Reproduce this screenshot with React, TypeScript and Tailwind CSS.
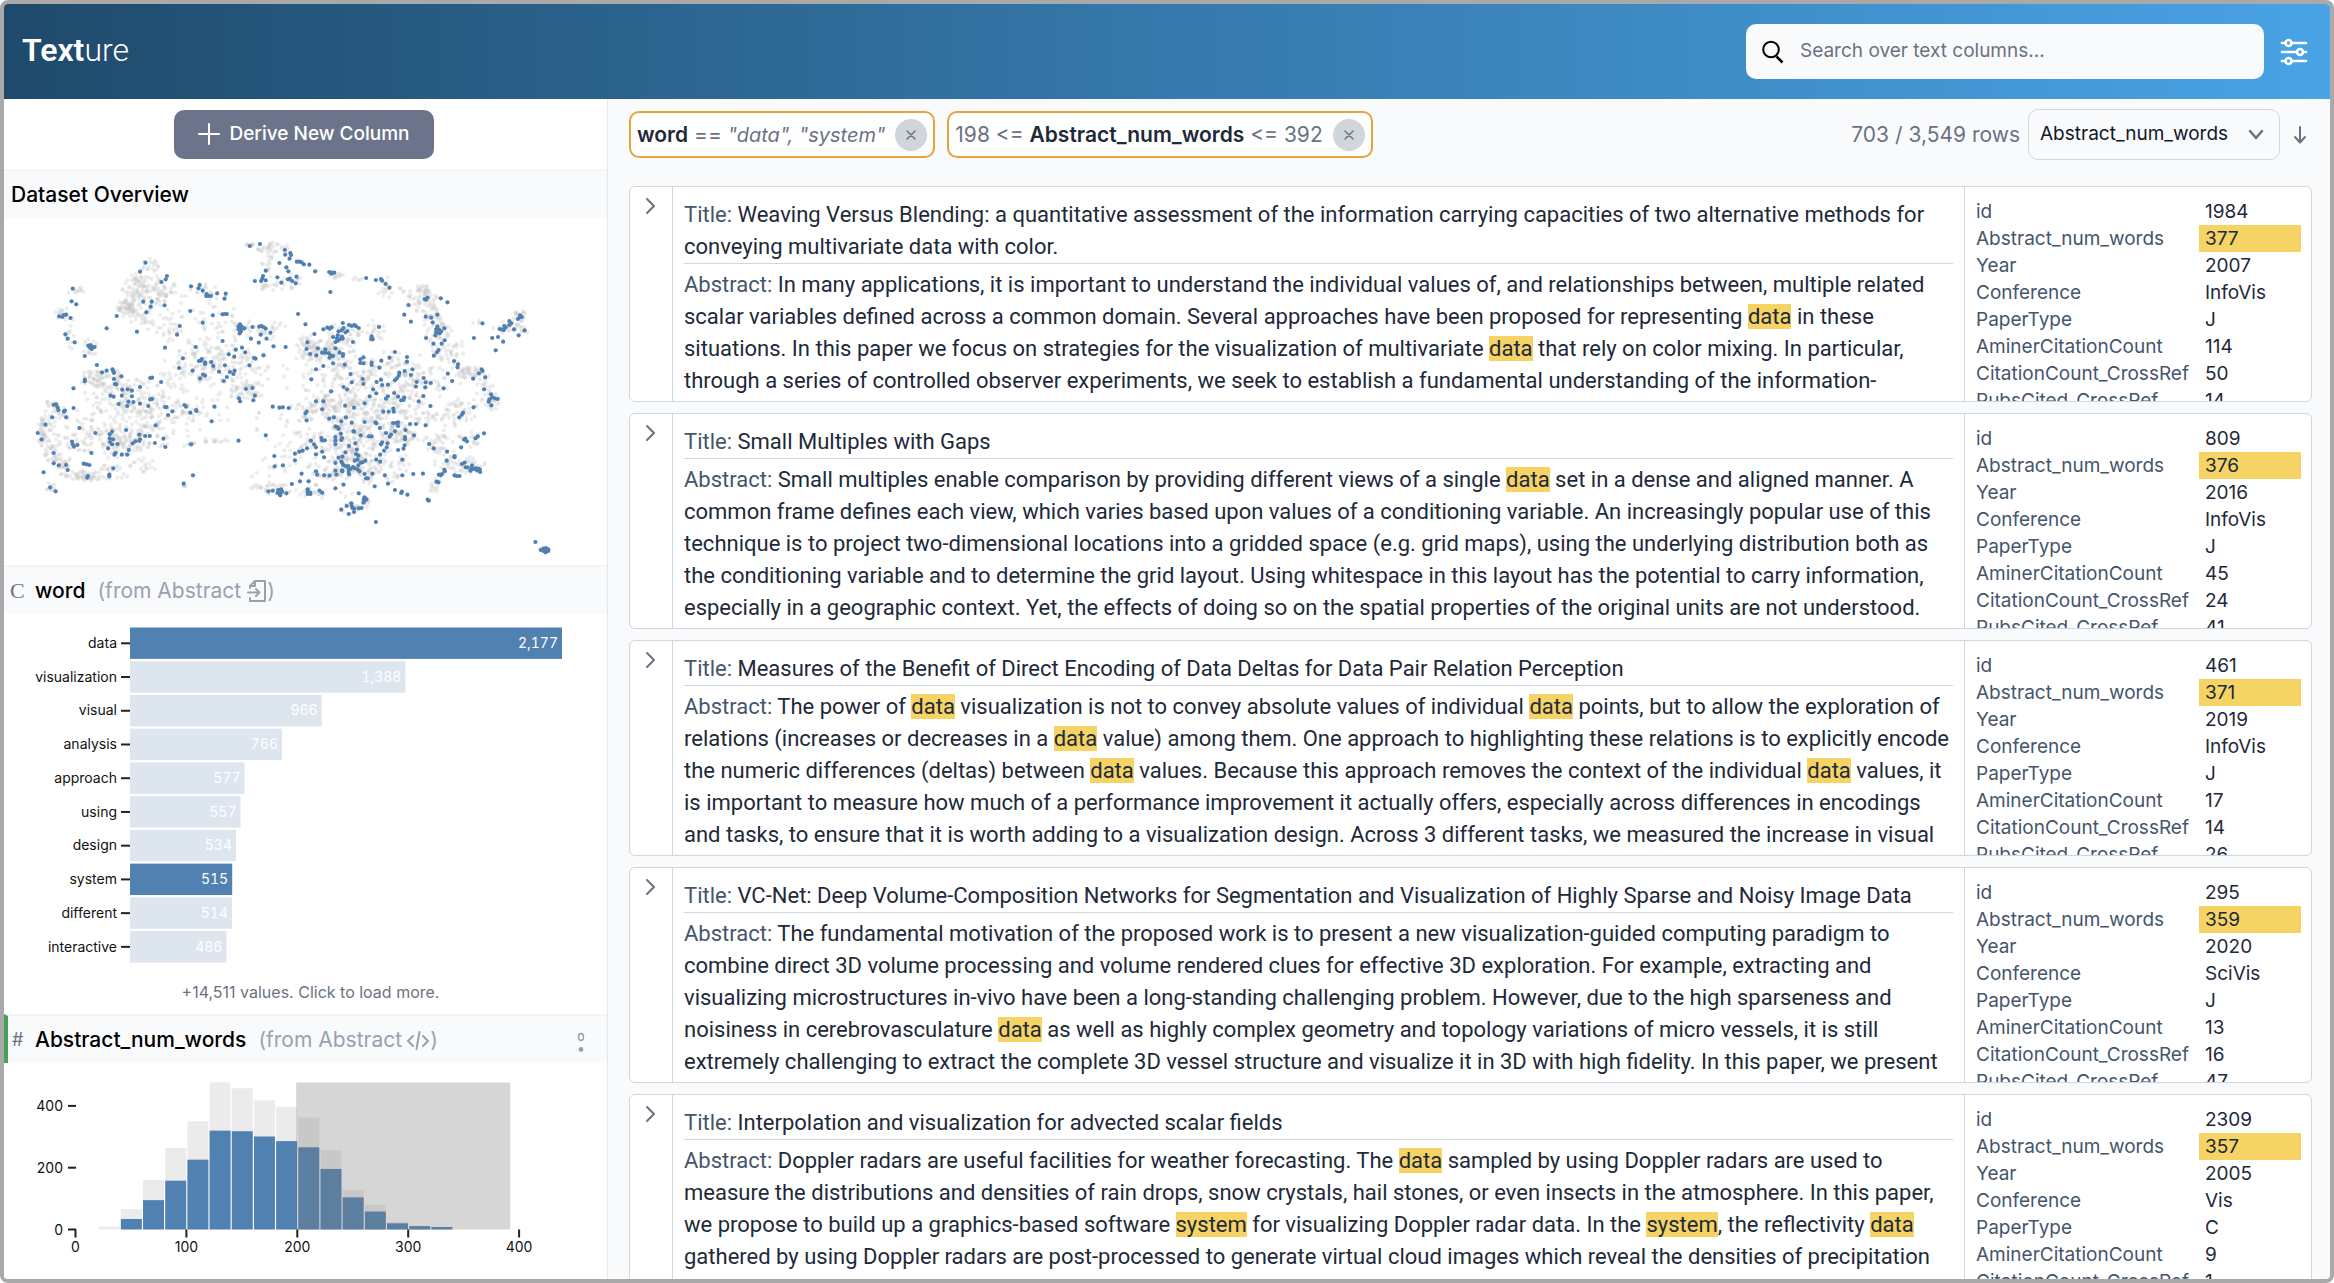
import { Fragment } from "react";

/* Projection of the selected papers, as "x,y" pairs in a 1568 x 1080 space. */
const SELECTED = `
642,108 668,102 732,120 733,134 746,129 748,135 744,146 718,159 736,172 741,184 763,155 769,155 775,157 781,163 795,164 683,182 676,198 655,213 671,213 674,206 683,211 713,202 723,218 740,208 745,206 751,213 760,220 762,200 810,184 846,186 853,188 859,188 852,191 941,204 966,210 979,207 982,212 991,222 1001,233 849,246 766,312
374,158 360,185 429,198 426,208 415,216 491,229 513,225 510,235 521,242 531,252 535,258 542,258 530,258 558,250 580,251 577,266 187,236 184,274 196,283 152,319 160,321 164,315 170,314 181,324 168,373 174,386 192,397 274,355 300,318 352,365 368,275 390,275 387,290 376,307 423,286 489,303 547,316 572,313 578,312 583,312 521,338 462,348 455,374 424,413 503,411
227,407 233,405 239,411 236,417 243,411 231,412 218,438 249,465 262,487 274,482 289,478 291,484 293,489 312,499 293,507 295,522 299,523 314,539 328,538 339,542 313,557 284,557 292,560 339,559 330,575 343,576 327,588 305,582 360,581 381,588 360,531 386,504 391,503 414,516 218,509 218,514 189,535 386,568 391,567 424,591 428,591 443,604 432,615 474,585 478,590 489,608 504,600 505,603 551,590 544,634 400,646
617,343 613,350 621,350 617,356 624,355 613,358 619,364 616,370 628,355 649,351 666,350 672,348 677,351 683,356 695,368 670,374 645,386 685,386 665,398 703,409 734,411 572,393 622,413 606,419 588,433 602,440 630,427 677,436 653,444 657,446 641,466 470,445 460,474 495,482 511,453 519,447 516,452 527,457 527,462 543,456 548,468 514,505 522,494 527,497 578,466 563,485 591,486 603,482 600,492 583,501 575,513 632,537 649,534 655,557 651,571 614,565 617,574
138,585 144,583 148,592 150,600 164,605 167,602 170,622 189,594 134,622 117,644 97,669 107,688 204,654 245,669 185,695 187,703 190,710 199,705 138,729 235,729 138,760 151,766 170,765 174,780 215,761 222,763 230,765 226,798 224,803 281,794 281,799 291,775 112,787 129,832 143,844 288,665 282,673 282,685 291,688 283,696 288,703 302,702 278,715 297,729 294,734 313,734 327,734 331,720 341,700 348,694 358,693 360,688 358,674 373,678 385,678 324,660 420,686 398,699 425,711 491,703 613,692 683,676 496,796 472,821
701,590 718,593 727,592 742,594 785,343 808,372 790,397 788,417 797,432 817,415 813,436 828,428 836,418 836,428 845,430 851,437 847,443 856,438 862,415 873,428 882,432 881,438 856,460 831,468 812,478 800,508 831,358 841,353 847,356 852,352 881,339 883,354 878,361 870,364 888,367 893,363 897,345 904,348 911,345 915,349 922,354 856,381 866,385 868,376 873,388 879,380 881,386 862,396 867,393 907,396 955,379 954,387 958,388 974,351
886,464 934,442 926,448 926,459 934,460 955,458 955,465 980,452 975,473 1001,443 1015,426 1046,441 1046,455 901,492 904,517 932,507 934,522 883,531 892,538 851,544 968,516 979,509 982,525 997,524 959,538 967,550 950,559 937,580 910,593 887,587 1013,549 997,559 992,566 1023,560 1031,571 1037,570 1039,563 1015,511 1020,505 1025,497 1026,488 1040,483 1060,478 1056,495 1071,516 1069,530 1089,504 1094,517 1107,519 1093,532 1088,558 1076,574 1106,588 1140,535 1151,491 1162,513 1167,453 1177,463 1176,472
1039,314 1050,285 1056,335 1091,267 1095,269 1099,263 1133,265 1150,277 1094,320 1108,323 1124,314 1112,337 1124,350 1121,358 1128,359 1121,368 1134,364 1142,355 1130,370 1119,376 1095,384 1143,391 1135,401 1114,401 1127,420 1123,427 1115,437
1240,340 1218,384 1265,384 1280,381 1284,357 1291,359 1296,348 1300,352 1295,360 1309,333 1314,340 1309,345 1321,358 1331,327 1337,316 1341,321 1336,322 1348,361 1333,376 1293,395 1274,421 1216,506 1231,490 1238,478 1240,483 1247,502 1244,538 1262,553 1265,562 1258,568 1272,565 1279,567 1256,575 1263,586 1217,592 1190,608 1187,614 1180,622
812,574 831,574 828,598 788,605 785,610 788,631 846,626 858,622 889,622 877,634 904,638 862,649 867,651 870,656 908,663 910,665 927,676 876,671 862,681 879,684 877,690 862,692 862,703 826,684 828,691 835,691 799,692 807,703 812,712 789,715 778,722 769,725 758,731 828,725 812,733 833,742 758,751 705,738 706,769 727,766 775,791 812,784 815,794 833,796 771,814 793,814 750,822 722,838 937,636 965,637 967,640 976,654 985,605 999,605 1011,596 1012,605 948,679 955,679 992,669 1010,639 1018,639 1023,637 1023,648 1015,664 1005,674 1001,680 1042,660 1054,642 1069,642 1094,646 1064,676 1041,681 1041,688 1040,706 1037,716 1023,720 996,700 982,697 979,703 994,712 987,722 977,734 967,749 977,755 913,700 897,708 917,719 888,727 915,732 921,737 880,740 870,743 862,759 877,754 880,760 882,765 888,768 895,768 896,776 901,777 907,771 912,775 921,766 919,749 912,752 927,758 932,757 939,752 919,778 924,784 897,793 896,786 880,784 879,781 862,782 865,794 847,797 937,792 941,805 945,805 957,791 989,796 1034,749 1034,796 1062,792 1087,791 997,821 963,829 883,824 862,835 922,850 1015,840 1033,845 1031,849 1047,854
1103,702 1115,715 1149,725 1168,738 1168,742 1148,752 1185,712 1196,686 1193,689 1200,694 1222,685 1228,679 1244,670 1187,762 1194,758 1197,772 1202,772 1213,766 1212,776 1217,777 1222,775 1228,776 1226,781 1233,778 1234,786 1209,782 1168,796 1174,798 1181,798 1142,779 1143,784 1136,792 1128,794 1133,796 1122,815 1127,817 1099,869 1102,872
690,844 701,842 715,840 713,849 720,850 725,845 720,856 736,850 791,838 791,846 791,852 797,848 798,852 821,842 828,848 937,862 935,869 942,868 937,873 934,878 903,880 891,888 904,888 877,899 906,894 910,896 922,895 929,894 910,906 896,912 966,936 1376,996 1390,1020 1397,1016 1397,1023 1402,1020 1402,1027 1409,1018 1409,1023 1403,1014`;

/* Density of the remaining papers: centre x, centre y, spread x, spread y, count. */
const DENSITY: [number, number, number, number, number][] = [
  [385, 172, 12, 14, 18], [350, 230, 16, 22, 45], [370, 255, 32, 30, 55], [330, 290, 16, 12, 50],
  [415, 240, 20, 26, 40], [350, 318, 20, 14, 25], [430, 345, 26, 26, 30], [195, 242, 12, 7, 10],
  [160, 310, 10, 10, 14], [178, 370, 8, 30, 12], [232, 415, 10, 16, 16], [240, 505, 20, 12, 40],
  [290, 520, 24, 22, 40], [350, 560, 40, 28, 60], [380, 605, 50, 24, 70], [270, 560, 30, 24, 30],
  [140, 600, 14, 20, 25], [115, 665, 10, 26, 50], [135, 720, 12, 20, 30], [165, 765, 16, 16, 30],
  [220, 797, 28, 8, 45], [290, 785, 28, 12, 25], [330, 700, 30, 18, 65], [220, 660, 46, 34, 70],
  [280, 690, 36, 30, 45], [370, 770, 20, 14, 18], [380, 650, 40, 26, 40], [130, 832, 8, 10, 10],
  [640, 106, 8, 3, 8], [700, 112, 24, 8, 28], [690, 150, 10, 18, 14], [690, 225, 22, 14, 18],
  [750, 215, 14, 16, 14], [860, 195, 12, 6, 10], [910, 206, 12, 3, 5], [990, 240, 10, 22, 14],
  [520, 240, 20, 10, 16], [560, 310, 30, 40, 18], [480, 330, 60, 40, 24], [620, 360, 30, 16, 20],
  [690, 360, 26, 16, 20], [550, 430, 50, 26, 60], [600, 460, 50, 30, 60], [500, 480, 30, 20, 40],
  [640, 540, 26, 14, 45], [500, 590, 40, 20, 24], [430, 520, 30, 40, 24], [560, 560, 60, 30, 20],
  [480, 640, 60, 30, 16], [560, 694, 20, 3, 12], [495, 700, 8, 6, 8], [440, 706, 30, 3, 5],
  [477, 825, 3, 6, 5], [820, 425, 28, 18, 75], [790, 400, 16, 18, 24], [870, 440, 24, 24, 45],
  [890, 370, 30, 18, 35], [965, 365, 12, 20, 18], [850, 520, 40, 34, 45], [930, 520, 40, 34, 60],
  [1000, 480, 44, 30, 60], [1060, 510, 40, 30, 60], [860, 590, 34, 20, 75], [790, 590, 24, 18, 25],
  [960, 610, 40, 24, 70], [1030, 590, 40, 28, 50], [1020, 670, 26, 18, 75], [930, 690, 50, 30, 70],
  [860, 690, 30, 34, 50], [900, 750, 30, 24, 60], [860, 790, 44, 20, 40], [780, 720, 36, 30, 35],
  [980, 760, 40, 28, 45], [960, 800, 34, 14, 26], [730, 640, 40, 40, 20], [690, 790, 24, 26, 12],
  [665, 830, 14, 5, 9], [715, 840, 18, 10, 22], [800, 842, 22, 10, 18], [1085, 240, 10, 8, 22],
  [1080, 275, 20, 16, 35], [1110, 300, 14, 26, 26], [1125, 360, 20, 26, 40], [1140, 410, 26, 20, 20],
  [1030, 240, 14, 6, 5], [1205, 487, 20, 10, 40], [1170, 430, 14, 26, 14], [1130, 480, 40, 34, 30],
  [1250, 540, 14, 24, 22], [1265, 575, 10, 14, 16], [1190, 600, 24, 24, 26], [1140, 620, 40, 34, 30],
  [1135, 700, 16, 16, 24], [1150, 760, 18, 26, 26], [1210, 765, 20, 14, 26], [1205, 690, 18, 14, 18],
  [1115, 825, 10, 12, 12], [1335, 320, 10, 12, 18], [1300, 350, 18, 12, 20], [1345, 365, 6, 10, 8],
  [1220, 336, 12, 3, 4], [1080, 650, 34, 40, 30], [910, 895, 18, 12, 20], [940, 868, 8, 8, 8],
  [1395, 1018, 8, 5, 8], [720, 500, 50, 34, 16], [900, 640, 60, 40, 60], [840, 850, 40, 8, 8],
];

const selectedPoints = SELECTED.trim()
  .split(/\s+/)
  .map((p) => p.split(",").map(Number));

function buildBackground() {
  let seed = 7;
  const rand = () => {
    seed = (seed * 1664525 + 1013904223) % 4294967296;
    return seed / 4294967296;
  };
  const points: number[][] = [];
  for (const [cx, cy, sx, sy, n] of DENSITY) {
    for (let i = 0; i < n; i++) {
      const r = Math.min(Math.sqrt(-2 * Math.log(rand() + 1e-9)), 1.8);
      const a = rand() * Math.PI * 2;
      points.push([cx + Math.cos(a) * r * sx, cy + Math.sin(a) * r * sy]);
    }
  }
  return points;
}
const backgroundPoints = buildBackground();

const WORDS: [string, number, boolean][] = [
  ["data", 2177, true],
  ["visualization", 1388, false],
  ["visual", 966, false],
  ["analysis", 766, false],
  ["approach", 577, false],
  ["using", 557, false],
  ["design", 534, false],
  ["system", 515, true],
  ["different", 514, false],
  ["interactive", 486, false],
];

const BINS: [number, number][] = [
  [10, 0], [66, 34], [160, 95], [264, 158], [350, 226], [476, 320], [457, 318], [418, 301],
  [397, 286], [362, 266], [256, 196], [128, 104], [80, 58], [24, 20], [12, 11], [8, 8],
];

type Paper = { title: string[]; abstract: string[]; values: string[] };

const FIELDS = [
  "id", "Abstract_num_words", "Year", "Conference", "PaperType",
  "AminerCitationCount", "CitationCount_CrossRef", "PubsCited_CrossRef",
];

/* Text between square brackets is highlighted. */
const PAPERS: Paper[] = [
  {
    title: [
      "Weaving Versus Blending: a quantitative assessment of the information carrying capacities of two alternative methods for",
      "conveying multivariate data with color.",
    ],
    abstract: [
      "In many applications, it is important to understand the individual values of, and relationships between, multiple related",
      "scalar variables defined across a common domain. Several approaches have been proposed for representing [data] in these",
      "situations. In this paper we focus on strategies for the visualization of multivariate [data] that rely on color mixing. In particular,",
      "through a series of controlled observer experiments, we seek to establish a fundamental understanding of the information-",
    ],
    values: ["1984", "377", "2007", "InfoVis", "J", "114", "50", "14"],
  },
  {
    title: ["Small Multiples with Gaps"],
    abstract: [
      "Small multiples enable comparison by providing different views of a single [data] set in a dense and aligned manner. A",
      "common frame defines each view, which varies based upon values of a conditioning variable. An increasingly popular use of this",
      "technique is to project two-dimensional locations into a gridded space (e.g. grid maps), using the underlying distribution both as",
      "the conditioning variable and to determine the grid layout. Using whitespace in this layout has the potential to carry information,",
      "especially in a geographic context. Yet, the effects of doing so on the spatial properties of the original units are not understood.",
    ],
    values: ["809", "376", "2016", "InfoVis", "J", "45", "24", "41"],
  },
  {
    title: ["Measures of the Benefit of Direct Encoding of Data Deltas for Data Pair Relation Perception"],
    abstract: [
      "The power of [data] visualization is not to convey absolute values of individual [data] points, but to allow the exploration of",
      "relations (increases or decreases in a [data] value) among them. One approach to highlighting these relations is to explicitly encode",
      "the numeric differences (deltas) between [data] values. Because this approach removes the context of the individual [data] values, it",
      "is important to measure how much of a performance improvement it actually offers, especially across differences in encodings",
      "and tasks, to ensure that it is worth adding to a visualization design. Across 3 different tasks, we measured the increase in visual",
    ],
    values: ["461", "371", "2019", "InfoVis", "J", "17", "14", "26"],
  },
  {
    title: ["VC-Net: Deep Volume-Composition Networks for Segmentation and Visualization of Highly Sparse and Noisy Image Data"],
    abstract: [
      "The fundamental motivation of the proposed work is to present a new visualization-guided computing paradigm to",
      "combine direct 3D volume processing and volume rendered clues for effective 3D exploration. For example, extracting and",
      "visualizing microstructures in-vivo have been a long-standing challenging problem. However, due to the high sparseness and",
      "noisiness in cerebrovasculature [data] as well as highly complex geometry and topology variations of micro vessels, it is still",
      "extremely challenging to extract the complete 3D vessel structure and visualize it in 3D with high fidelity. In this paper, we present",
    ],
    values: ["295", "359", "2020", "SciVis", "J", "13", "16", "47"],
  },
  {
    title: ["Interpolation and visualization for advected scalar fields"],
    abstract: [
      "Doppler radars are useful facilities for weather forecasting. The [data] sampled by using Doppler radars are used to",
      "measure the distributions and densities of rain drops, snow crystals, hail stones, or even insects in the atmosphere. In this paper,",
      "we propose to build up a graphics-based software [system] for visualizing Doppler radar data. In the [system], the reflectivity [data]",
      "gathered by using Doppler radars are post-processed to generate virtual cloud images which reveal the densities of precipitation",
    ],
    values: ["2309", "357", "2005", "Vis", "C", "9", "1", "8"],
  },
];

function Lines({ label, lines }: { label: string; lines: string[] }) {
  return (
    <p className="whitespace-nowrap">
      <span className="text-slate-600">{label}: </span>
      {lines.map((line, i) => (
        <Fragment key={i}>
          {i > 0 && <br />}
          {line.split(/[[\]]/).map((part, j) =>
            j % 2 ? (
              <mark key={j} className="bg-[#f5d365] text-inherit">{part}</mark>
            ) : (
              <Fragment key={j}>{part}</Fragment>
            ),
          )}
        </Fragment>
      ))}
    </p>
  );
}

function PaperCard({ paper }: { paper: Paper }) {
  return (
    <article className="flex h-[216px] shrink-0 overflow-hidden rounded-md border border-gray-300 bg-white">
      <div className="flex w-[43px] shrink-0 items-start justify-center border-r border-gray-300 pt-2.5">
        <button type="button" aria-label="Expand row" className="text-gray-500">
          <svg width="12" height="18" viewBox="0 0 12 18" fill="none" stroke="currentColor" strokeWidth="2" strokeLinecap="round" strokeLinejoin="round">
            <path d="M2 2l7 7-7 7" />
          </svg>
        </button>
      </div>
      <div className="min-w-0 flex-1 overflow-hidden px-[11px] pt-3 font-['Roboto',sans-serif] text-[22px] leading-8 text-gray-800">
        <Lines label="Title" lines={paper.title} />
        <div className="border-t border-gray-300 pt-[5px]">
          <Lines label="Abstract" lines={paper.abstract} />
        </div>
      </div>
      <div className="w-[347px] shrink-0 overflow-hidden border-l border-gray-300 pt-[11px] pr-2.5 pl-[11px]">
        <table className="w-full table-fixed text-left text-[19px] leading-[27px] text-gray-800">
          <tbody>
            {FIELDS.map((field, i) => (
              <tr key={field}>
                <th className="w-[223px] p-0 font-normal text-slate-600">{field}</th>
                <td className={i === 1 ? "bg-[#f5d365] p-0 pl-1.5" : "p-0 pl-1.5"}>{paper.values[i]}</td>
              </tr>
            ))}
          </tbody>
        </table>
      </div>
    </article>
  );
}

function Overview() {
  return (
    <svg viewBox="4 218 603 347" className="block w-full">
      <g fill="#c8c8c8" fillOpacity="0.34">
        {backgroundPoints.map(([x, y], i) => (
          <circle key={i} cx={x / 2.57} cy={210 + y / 3} r="2" />
        ))}
      </g>
      <g fill="#4f80b1">
        {selectedPoints.map(([x, y], i) => (
          <circle key={i} cx={x / 2.57} cy={210 + y / 3} r="2.1" />
        ))}
      </g>
    </svg>
  );
}

function WordChart() {
  return (
    <svg viewBox="4 614 603 360" className="block w-full font-['Inter',sans-serif] text-[14px]">
      {WORDS.map(([word, count, selected], i) => {
        const top = 627.5 + i * 33.73;
        const width = (count / 2177) * 432;
        return (
          <g key={word}>
            <text x="117" y={top + 20.5} textAnchor="end" fill="#111">{word}</text>
            <rect x="121" y={top + 14.8} width="9" height="2" fill="#222" />
            <rect x="130" y={top} width={width} height="31.4" fill={selected ? "#5181b1" : "#dde5ef"} />
            <text x={130 + width - 4} y={top + 20.5} textAnchor="end" fill="#fff" className="tabular-nums">
              {count.toLocaleString("en-US")}
            </text>
          </g>
        );
      })}
    </svg>
  );
}

function Histogram() {
  const x = (v: number) => 75.5 + v * 1.109;
  const h = (v: number) => v * 0.309;
  const base = 1229.5;
  return (
    <svg viewBox="4 1063 603 213" className="block w-full font-['Inter',sans-serif] text-[14px]">
      {BINS.map(([all, some], i) => (
        <g key={i}>
          <rect x={x(20 + i * 20) + 1} y={base - h(all)} width="21" height={h(all)} fill="#ebebeb" />
          <rect x={x(20 + i * 20) + 1} y={base - h(some)} width="21" height={h(some)} fill="#5181b1" />
        </g>
      ))}
      <rect x={x(199)} y="1082.5" width={x(392) - x(199)} height="147" fill="#777" fillOpacity="0.3" />
      {[0, 200, 400].map((v) => (
        <g key={v}>
          <rect x="68" y={base - h(v) - 1} width="8" height="2" fill="#222" />
          <text x="63" y={base - h(v) + 5} textAnchor="end" fill="#111">{v}</text>
        </g>
      ))}
      {[0, 100, 200, 300, 400].map((v) => (
        <g key={v}>
          <rect x={x(v) - 1} y={base} width="2" height="8" fill="#222" />
          <text x={x(v)} y="1252" textAnchor="middle" fill="#111">{v}</text>
        </g>
      ))}
    </svg>
  );
}

function Chip({ children, label }: { children: React.ReactNode; label: string }) {
  return (
    <div className="flex h-[47px] items-center rounded-[10px] border-2 border-[#e8a23d] bg-white px-1.5 text-[21px] whitespace-nowrap text-gray-500">
      <span>{children}</span>
      <button type="button" aria-label={label} className="ml-2.5 flex size-8 items-center justify-center rounded-full bg-gray-300 text-gray-500">
        <svg width="10" height="10" viewBox="0 0 10 10" fill="none" stroke="currentColor" strokeWidth="1.5" strokeLinecap="round">
          <path d="M1 1l8 8M9 1L1 9" />
        </svg>
      </button>
    </div>
  );
}

export default function App() {
  return (
    <div className="flex h-screen flex-col overflow-hidden rounded-lg border-4 border-[#a9a9a9] bg-gray-50 font-['Inter',sans-serif]">
      <header className="flex h-[95px] shrink-0 items-center bg-linear-to-r from-[#1f4a6b] via-[#3679ac] to-[#49a3e5] pr-[22px] pl-[18px]">
        <h1 className="pb-1 font-['Roboto',sans-serif] text-[32px] leading-10 font-light text-white">
          <span className="font-semibold">Text</span>ure
        </h1>
        <label className="ml-auto flex h-[55px] w-[518px] items-center gap-4 rounded-[10px] bg-gray-50 pr-3 pl-4">
          <svg width="22" height="24" viewBox="0 0 22 24" fill="none" stroke="#000" strokeWidth="2" aria-hidden="true">
            <circle cx="9" cy="9.5" r="7.8" />
            <path d="M14.5 16.5l6 6" strokeWidth="2.6" />
          </svg>
          <input type="text" aria-label="Search over text columns" placeholder="Search over text columns..." className="min-w-0 flex-1 bg-transparent text-[19px] text-gray-900 outline-none placeholder:text-gray-500" />
        </label>
        <button type="button" aria-label="Settings" className="ml-4 text-white">
          <svg width="28" height="28" viewBox="0 0 28 28" fill="none" stroke="currentColor" strokeWidth="2.7" strokeLinecap="round">
            <path d="M2 5h3M12 5h14M2 14h14M24 14h2M2 23h3M12 23h14" />
            <circle cx="8.5" cy="5" r="3" />
            <circle cx="20" cy="14" r="3" />
            <circle cx="8.5" cy="23" r="3" />
          </svg>
        </button>
      </header>

      <div className="flex min-h-0 flex-1">
        <aside className="w-[604px] shrink-0 overflow-hidden border-r border-gray-200 bg-white">
          <div className="flex h-[70px] items-center justify-center pr-1">
            <button type="button" className="flex h-[49px] items-center gap-2.5 rounded-[10px] bg-[#6b748b] px-6 text-[19px] font-medium text-white">
              <svg width="22" height="22" viewBox="0 0 22 22" fill="none" stroke="currentColor" strokeWidth="2" strokeLinecap="round">
                <path d="M11 1v20M1 11h20" />
              </svg>
              Derive New Column
            </button>
          </div>

          <section>
            <h2 className="flex h-[49px] items-center border-t-2 border-gray-100 bg-gray-50 pl-[7px] text-[21px] font-medium text-black">
              Dataset Overview
            </h2>
            <Overview />
          </section>

          <section>
            <h2 className="flex h-[49px] items-center border-t-2 border-gray-100 bg-gray-50 text-[21px] font-medium whitespace-nowrap text-black">
              <span className="w-[31px] pl-1.5 font-['Liberation_Serif',serif] text-[22px] font-normal text-gray-500">C</span>
              word
              <span className="ml-3 flex items-center font-normal text-gray-400">
                (from Abstract
                <svg className="ml-1.5" width="20" height="22" viewBox="0 0 20 22" fill="none" stroke="currentColor" strokeWidth="2" strokeLinecap="round" strokeLinejoin="round">
                  <path d="M3 8V6l5-5h10v20H3v-3" />
                  <path d="M8 1v5H3" />
                  <path d="M1 12.500h11M9 9l3.500 3.500L9 16" />
                </svg>
                )
              </span>
            </h2>
            <WordChart />
            <button type="button" className="block h-10 w-full pb-1 pl-2.5 text-center text-base text-gray-500">
              +14,511 values. Click to load more.
            </button>
          </section>

          <section>
            <h2 className="flex h-[49px] items-center border-t-2 border-l-4 border-t-gray-100 border-l-[#4a9f5b] bg-gray-50 pr-4 text-[21px] font-medium whitespace-nowrap text-black">
              <span className="w-[27px] pl-1 text-[18px] font-normal text-gray-500">#</span>
              Abstract_num_words
              <span className="ml-3 flex items-center font-normal text-gray-400">
                (from Abstract
                <svg className="ml-1" width="24" height="20" viewBox="0 0 24 20" fill="none" stroke="currentColor" strokeWidth="2" strokeLinecap="round" strokeLinejoin="round">
                  <path d="M7 6l-5 5 5 5M17 6l5 5-5 5M13.500 2l-3 17" />
                </svg>
                )
              </span>
              <button type="button" aria-label="Column options" className="ml-auto text-gray-400">
                <svg width="20" height="24" viewBox="0 0 20 24">
                  <ellipse cx="10" cy="9" rx="2.500" ry="3.500" fill="none" stroke="currentColor" strokeWidth="1.500" />
                  <circle cx="10" cy="21.500" r="2.400" fill="currentColor" />
                </svg>
              </button>
            </h2>
            <Histogram />
          </section>
        </aside>

        <main className="flex min-w-0 flex-1 flex-col overflow-hidden">
          <div className="flex h-[87px] shrink-0 items-start gap-3 pt-3 pr-[22px] pl-[21px]">
            <Chip label="Remove word filter">
              <b className="font-semibold text-gray-800">word</b> == <i className="text-xl">"data", "system"</i>
            </Chip>
            <Chip label="Remove word count filter">
              198 &lt;= <b className="font-semibold text-gray-800">Abstract_num_words</b> &lt;= 392
            </Chip>
            <div className="ml-auto flex h-[47px] items-center">
              <span className="mr-2 text-[21px] whitespace-nowrap text-gray-500">703 / 3,549 rows</span>
              <div className="relative">
                <select aria-label="Sort column" className="h-[51px] w-[252px] appearance-none rounded-[10px] border border-gray-300 bg-gray-50 pl-[11px] text-[19px] text-gray-900">
                  <option>Abstract_num_words</option>
                </select>
                <svg className="pointer-events-none absolute top-5 right-4 text-gray-500" width="16" height="12" viewBox="0 0 16 12" fill="none" stroke="currentColor" strokeWidth="2.500" strokeLinecap="round" strokeLinejoin="round">
                  <path d="M2 2l6 7 6-7" />
                </svg>
              </div>
              <button type="button" aria-label="Sort descending" className="ml-3 text-gray-500">
                <svg width="16" height="18" viewBox="0 0 16 18" fill="none" stroke="currentColor" strokeWidth="2" strokeLinecap="round" strokeLinejoin="round">
                  <path d="M8 1v15M3 11l5 5.500 5-5.500" />
                </svg>
              </button>
            </div>
          </div>
          <div className="flex min-h-0 flex-1 flex-col gap-[11px] overflow-hidden pr-[18px] pl-[21px]">
            {PAPERS.map((paper) => (
              <PaperCard key={paper.values[0]} paper={paper} />
            ))}
          </div>
        </main>
      </div>
    </div>
  );
}
